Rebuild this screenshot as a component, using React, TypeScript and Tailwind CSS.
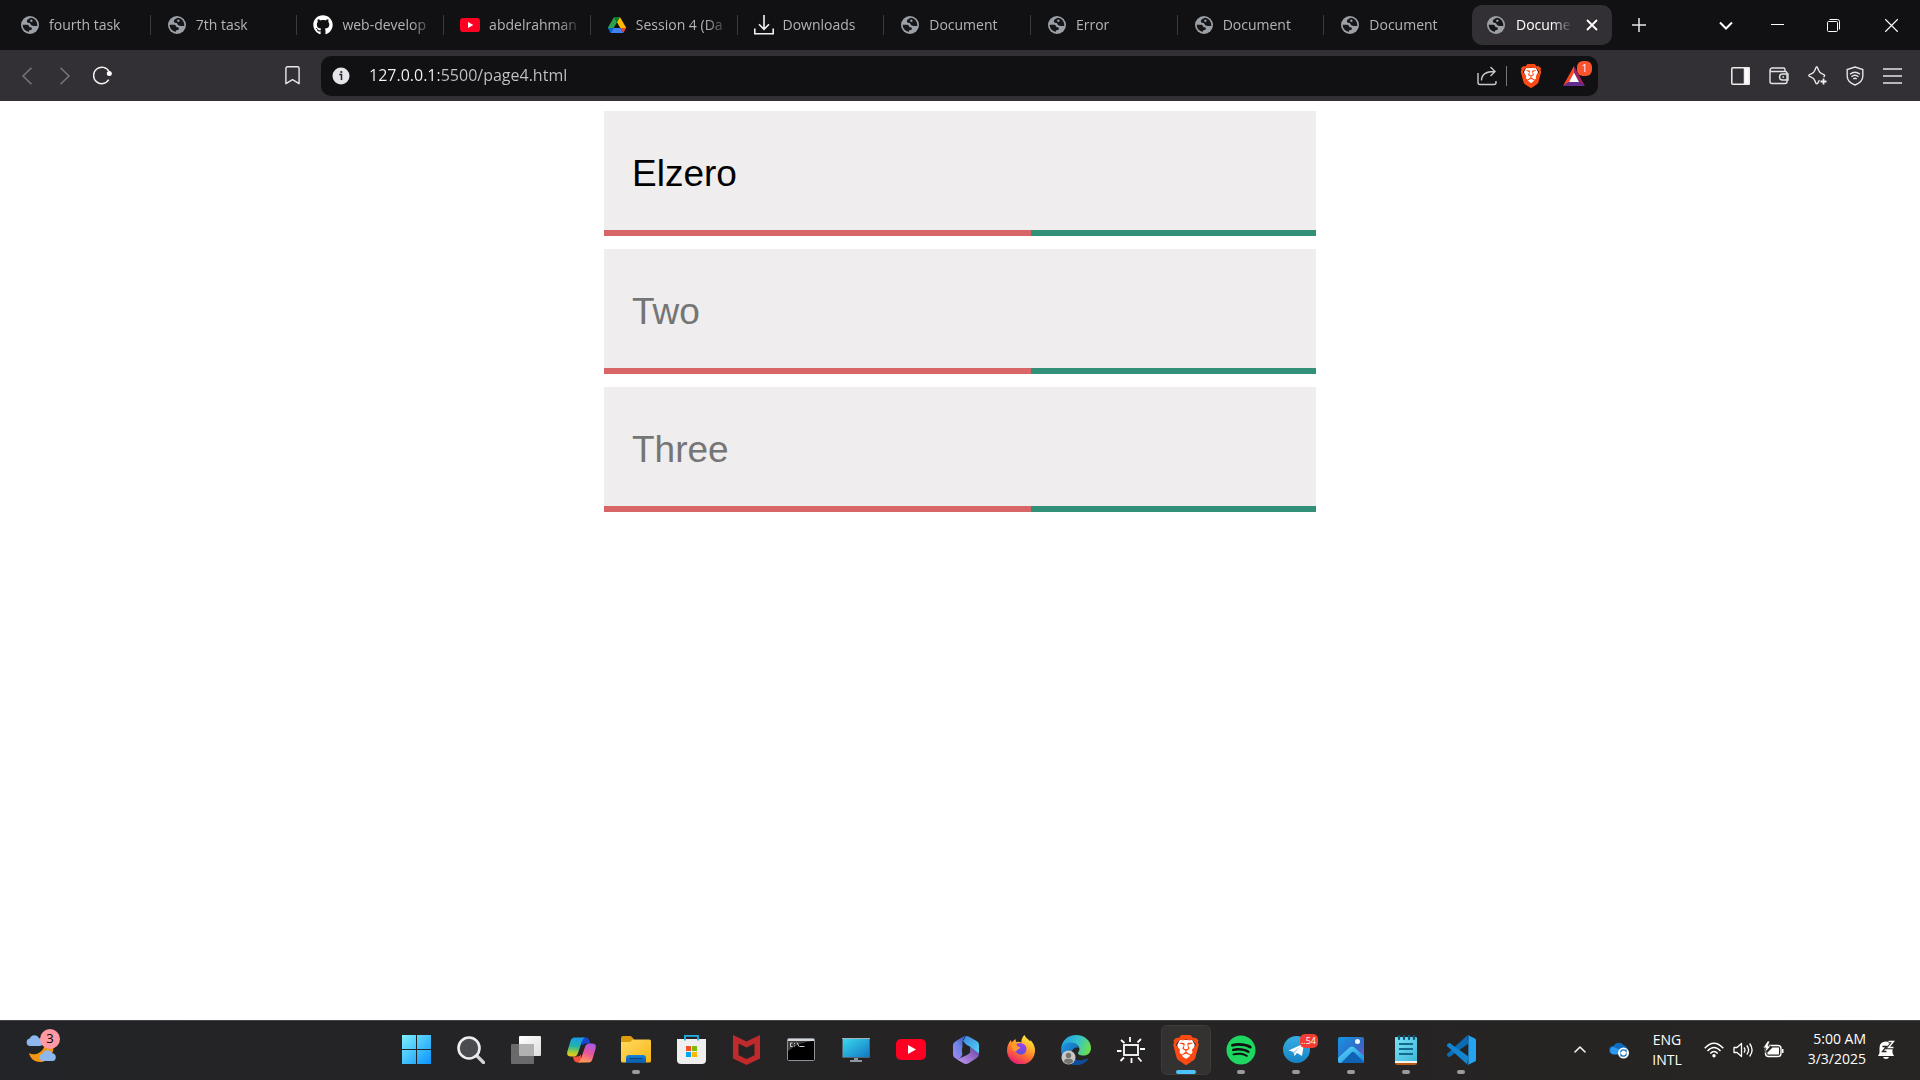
import React, { useState } from "react";
import { FaGithub, FaSpotify } from "react-icons/fa6";
import { SiBrave } from "react-icons/si";
import { VscChevronUp } from "react-icons/vsc";

type IconProps = { className?: string };

/* ---------- favicons ---------- */

const Globe = ({ className = "size-[18px]" }: IconProps) => (
  <svg viewBox="0 0 18 18" className={className} aria-hidden="true">
    <circle cx="9" cy="9" r="9" fill="#9aa0a6" />
    <path
      d="M1.700 8.800h3.800c1.500 0 2.500.6 2.700 1.600.1.700.9.800 1.500.9.900.2 1.300.8 1.100 1.600-.2.900-1 1.100-1.800 1.200-.6.100-.9.700-1.100 1.600C4.300 15.300 1.600 12.500 1.700 8.800Z M9.700 1.800C7.600 2.600 6 3.700 5.800 5.100c-.1 1.200 1 1.900 2.200 1.900.8 0 1.200.5 1.600 1.200.6 1.100 1.600 1.700 3 1.700h3.700c.3-4.300-2.700-7.700-6.600-8.100Zm.3 1.700c1.300.2 1.700.9 1.500 1.700-.3.900-1.500.8-2.100.3-.6-.6-.3-1.600.6-2Z"
      fill="#17171a"
    />
  </svg>
);

const YouTube = ({ className }: IconProps) => (
  <svg viewBox="0 0 30 21" className={className} aria-hidden="true">
    <rect width="30" height="21" rx="5" fill="#ff0022" />
    <path d="M12 6l8 4.500-8 4.500Z" fill="#fff" />
  </svg>
);

const Drive = () => (
  <svg viewBox="0 0 87.300 78" className="w-[18px]" aria-hidden="true">
    <path d="m6.600 66.850 3.850 6.650c.8 1.400 1.950 2.500 3.300 3.300l13.750-23.800H0c0 1.550.4 3.100 1.200 4.500z" fill="#0066da" />
    <path d="M43.650 25 29.900 1.200c-1.350.8-2.500 1.900-3.300 3.300L1.200 48.500A9 9 0 0 0 0 53h27.500z" fill="#2ba24c" />
    <path d="M73.550 76.800c1.350-.8 2.500-1.900 3.300-3.300l1.600-2.750L86.100 57.500c.8-1.400 1.200-2.950 1.200-4.500H59.800l5.850 11.500z" fill="#ea4335" />
    <path d="M43.650 25 57.400 1.200C56.050.4 54.500 0 52.900 0H34.400c-1.600 0-3.150.45-4.500 1.200z" fill="#00832d" />
    <path d="M59.800 53H27.500L13.750 76.800c1.350.8 2.900 1.200 4.500 1.200h50.800c1.600 0 3.150-.45 4.500-1.200z" fill="#3f82f8" />
    <path d="M73.400 26.500 60.700 4.500c-.8-1.400-1.950-2.500-3.300-3.300L43.650 25 59.800 53h27.450c0-1.550-.4-3.100-1.200-4.500z" fill="#ffba00" />
  </svg>
);

const Download = () => (
  <svg viewBox="0 0 20 20" className="size-5" fill="none" stroke="#f2f2f2" strokeWidth="1.600" aria-hidden="true">
    <path d="M10 0v14M5 9.300l5 5 5-5M.8 13.500v5.300h18.400v-5.300" />
  </svg>
);

const Close = ({ className }: IconProps) => (
  <svg viewBox="0 0 12 12" className={className} fill="none" stroke="currentColor" aria-hidden="true">
    <path d="M1 1l10 10M11 1L1 11" />
  </svg>
);

const tabs: { title: string; icon: React.ReactNode }[] = [
  { title: "fourth task", icon: <Globe /> },
  { title: "7th task", icon: <Globe /> },
  { title: "web-develop", icon: <FaGithub className="size-5 text-white" aria-hidden="true" /> },
  { title: "abdelrahman", icon: <YouTube className="w-5" /> },
  { title: "Session 4 (Da", icon: <Drive /> },
  { title: "Downloads", icon: <Download /> },
  { title: "Document", icon: <Globe /> },
  { title: "Error", icon: <Globe /> },
  { title: "Document", icon: <Globe /> },
  { title: "Document", icon: <Globe /> },
];

function TabStrip() {
  return (
    <header className="flex h-[50px] items-center bg-[#111113] pl-1 text-[14px] text-[#b4b4b6]">
      <nav aria-label="Tabs" className="flex min-w-0 flex-1">
        {tabs.map((tab, i) => (
          <button
            key={i}
            className={
              "flex h-5 min-w-0 flex-1 items-center gap-[9px] pl-4 pr-2 text-left " +
              (i < 9 ? "border-r border-[#3b3b3e]" : "")
            }
          >
            <span className="flex w-5 shrink-0 justify-center">{tab.icon}</span>
            <span className="min-w-0 flex-1 overflow-hidden whitespace-nowrap pb-0.5 [mask-image:linear-gradient(to_right,#000_70px,transparent_94px)]">
              {tab.title}
            </span>
          </button>
        ))}
      </nav>
      <div className="ml-[2px] flex h-10 w-[140px] items-center rounded-[10px] bg-[#323035] pl-[15px]">
        <button className="flex items-center gap-[11px] text-white">
          <Globe />
          <span className="w-[56px] whitespace-nowrap pb-0.5 text-left [mask-image:linear-gradient(to_right,#000_calc(100%-20px),transparent)]">
            Docume
          </span>
        </button>
        <button aria-label="Close tab" className="ml-[14px] text-white">
          <Close className="size-3 stroke-[1.800]" />
        </button>
      </div>
      <div className="flex w-[308px] items-center text-white">
        <button aria-label="New tab" className="flex w-[54px] justify-center">
          <svg viewBox="0 0 14 14" className="size-[14px]" stroke="#e6e6e6" strokeWidth="1.500" aria-hidden="true">
            <path d="M7 0v14M0 7h14" />
          </svg>
        </button>
        <button aria-label="Search tabs" className="ml-8 flex w-14 justify-center">
          <svg viewBox="0 0 14 9" className="w-[14px]" fill="none" stroke="#fff" strokeWidth="2" aria-hidden="true">
            <path d="M1 1.500l6 6 6-6" />
          </svg>
        </button>
        <button aria-label="Minimize" className="flex w-[47px] justify-center">
          <svg viewBox="0 0 13 13" className="size-[13px]" stroke="#fff" aria-hidden="true">
            <path d="M0 5.500h13" />
          </svg>
        </button>
        <button aria-label="Restore" className="flex w-[65px] justify-center">
          <svg viewBox="0 0 13 13" className="size-[13px]" fill="none" stroke="#fff" aria-hidden="true">
            <rect x=".5" y="2.500" width="10" height="10" rx="1" />
            <path d="M2.500 .5h8q2 0 2 2v8" />
          </svg>
        </button>
        <button aria-label="Close window" className="flex flex-1 justify-center pr-1">
          <Close className="size-[15px] stroke-[.9]" />
        </button>
      </div>
    </header>
  );
}

const BraveLion = ({ className }: IconProps) => (
  <span className={"grid place-items-center " + (className ?? "")}>
    <svg viewBox="0 0 24 24" className="col-start-1 row-start-1 size-full" aria-hidden="true">
      <path d="M7 4h10l2 4-2 8.500L12 21l-5-4.500L5 8Z" fill="#fff" />
    </svg>
    <SiBrave className="col-start-1 row-start-1 size-full text-[#fc4a14]" aria-hidden="true" />
  </span>
);

function Toolbar() {
  const [url, setUrl] = useState("127.0.0.1:5500/page4.html");
  return (
    <div className="flex h-[51px] items-center bg-[#323035] text-[#e8e8ea]">
      <div className="flex w-[321px] shrink-0 items-center pl-[18px]">
        <button aria-label="Back" className="flex w-[18px] justify-center text-[#79787c]">
          <svg viewBox="0 0 10 18" className="h-[18px]" fill="none" stroke="currentColor" strokeWidth="1.500" aria-hidden="true">
            <path d="M9.500.8L1 9l8.500 8.200" />
          </svg>
        </button>
        <button aria-label="Forward" className="ml-5 flex w-[18px] justify-center text-[#79787c]">
          <svg viewBox="0 0 10 18" className="h-[18px]" fill="none" stroke="currentColor" strokeWidth="1.500" aria-hidden="true">
            <path d="M.5.8L9 9 .5 17.200" />
          </svg>
        </button>
        <button aria-label="Reload" className="ml-[19px]">
          <svg viewBox="0 0 19 19" className="size-[19px]" fill="none" stroke="#f4f4f4" strokeWidth="1.500" aria-hidden="true">
            <path d="M15.800 13.700a8.200 8.200 0 1 1 .2-8.200" />
            <circle cx="16.300" cy="7.500" r="2.500" fill="#fff" stroke="none" />
          </svg>
        </button>
        <button aria-label="Bookmark this page" className="ml-[173px]">
          <svg viewBox="0 0 15 19" className="h-[19px]" fill="none" stroke="#e8e8ea" strokeWidth="1.400" strokeLinejoin="round" aria-hidden="true">
            <path d="M.9 2.500q0-1.700 1.700-1.700h9.800q1.700 0 1.700 1.700v15.200l-6.600-4-6.600 4Z" />
          </svg>
        </button>
      </div>
      <div className="flex h-10 min-w-0 flex-1 items-center rounded-[10px] bg-[#111113] pl-[11px] pr-[6px]">
        <button aria-label="Site information">
          <svg viewBox="0 0 18 18" className="size-[18px]" aria-hidden="true">
            <circle cx="9" cy="9" r="8.500" fill="#e6e5ea" />
            <path d="M7.300 7.500H9.500V13" stroke="#222" strokeWidth="1.500" fill="none" />
            <circle cx="9.300" cy="5" r="1.100" fill="#222" />
          </svg>
        </button>
        <input
          aria-label="Address"
          value={url}
          onChange={(e) => setUrl(e.target.value)}
          className="ml-[19px] min-w-0 flex-1 bg-[linear-gradient(90deg,#f5f5f5_70px,#c4c4c6_70px)] bg-clip-text pb-0.5 text-[16px] text-transparent caret-white outline-none"
        />
        <button aria-label="Share">
          <svg viewBox="0 0 20 20" className="size-5" fill="none" stroke="#c9c9cb" strokeWidth="1.400" aria-hidden="true">
            <path d="M1 7v9.500q0 2 2 2h14q2 0 2-2V15M4.500 14.500c0-5 3.500-9 13-9M13.500 1l4.500 4.500-4.500 4.500" />
          </svg>
        </button>
        <span className="ml-[9px] h-5 w-px bg-[#77777a]" />
        <button aria-label="Brave Shields" className="ml-3">
          <BraveLion className="size-6" />
        </button>
        <button aria-label="Rewards, 1 new" className="relative ml-5">
          <svg viewBox="0 0 22 20" className="w-[22px]" aria-hidden="true">
            <path d="M11 0L0 20l5.500-3.500L11 7Z" fill="#ff4724" />
            <path d="M11 0l11 20-5.500-3.500L11 7Z" fill="#9e1f63" />
            <path d="M0 20h22l-5.500-4h-11Z" fill="#662d91" />
            <path d="M11 6.500l5 9.500H6Z" fill="#fff" />
          </svg>
          <span className="absolute -right-[7px] -top-[5px] grid size-[15px] place-items-center rounded-[6px] bg-[#fb542b] text-[10px] leading-none text-white">
            1
          </span>
        </button>
        <span className="w-[7px]" />
      </div>
      <div className="flex w-[322px] shrink-0 items-center justify-end gap-[19px] pr-[18px]">
        <button aria-label="Show sidebar">
          <svg viewBox="0 0 19 18" className="w-[19px]" fill="none" stroke="#eee" strokeWidth="1.500" aria-hidden="true">
            <rect x=".8" y=".8" width="17.400" height="16.400" rx="1" />
            <path d="M13.500 1h4.500v16h-4.500Z" fill="#fff" />
          </svg>
        </button>
        <button aria-label="Wallet">
          <svg viewBox="0 0 20 18" className="w-5" fill="none" stroke="#e4e4e6" strokeWidth="1.400" aria-hidden="true">
            <path d="M1 3v11.500q0 2 2 2h13q2 0 2-2v-8q0-2-2-2H3q-2 0-2-1.500T3 1h11.500q1.500 0 1.500 1.500v2" />
            <path d="M19 7h-5.500a3 3 0 0 0 0 6H19ZM13.500 10h1.500" />
          </svg>
        </button>
        <button aria-label="Leo AI">
          <svg viewBox="0 0 19 19" className="size-[19px]" fill="none" stroke="#eee" strokeWidth="1.400" strokeLinejoin="round" aria-hidden="true">
            <path d="M11.500 14.300c-.5.500-.8 1-1 1.600-.6 1.300-1 2-1.800 2s-1-.8-1.600-2.700c-.8-2.500-1.500-3.200-3.900-4-1.700-.6-2.400-.9-2.400-1.700s.7-1.100 2.400-1.700c2.400-.8 3.100-1.500 3.900-3.900.6-1.800.8-3.100 1.600-3.100s1.100 1.300 1.700 3.100c.8 2.400 1.500 3.100 3.800 3.900 1.700.6 2.400.9 2.400 1.700 0 .6-.4 1-1.100 1.300" />
            <path d="M15.500 12.500v6M12.500 15.500h6" strokeWidth="1.800" />
          </svg>
        </button>
        <button aria-label="VPN">
          <svg viewBox="0 0 18 20" className="w-[18px]" fill="none" stroke="#e4e4e6" strokeWidth="1.400" aria-hidden="true">
            <path d="M9 1l7.800 2.500v6.500q0 6-7.800 9-7.800-3-7.800-9V3.500Z" />
            <path d="M4 8.200q5-4 10 0M5.500 10.700q3.500-3 7 0M7.300 13q1.700-1.500 3.400 0" />
          </svg>
        </button>
        <button aria-label="Menu">
          <svg viewBox="0 0 19 16" className="w-[19px]" stroke="#e4e4e6" strokeWidth="1.500" aria-hidden="true">
            <path d="M0 1h19M0 8h19M0 15h19" />
          </svg>
        </button>
      </div>
    </div>
  );
}

/* ---------- page ---------- */

function Field({ name, initial = "" }: { name: string; initial?: string }) {
  const [value, setValue] = useState(initial);
  return (
    <div>
      <input
        aria-label={name}
        placeholder={name}
        value={value}
        onChange={(e) => setValue(e.target.value)}
        className="block h-[119px] w-full bg-[#efedee] px-7 pt-[6px] font-['Liberation_Sans',Arial,sans-serif] text-[37px] text-black outline-none placeholder:text-[#757575] placeholder:opacity-100"
      />
      <div className="flex h-[6px]">
        <span className="w-3/5 bg-[#d96666]" />
        <span className="w-2/5 bg-[#339078]" />
      </div>
    </div>
  );
}

/* ---------- taskbar icons ---------- */

const WindowsLogo = () => (
  <svg viewBox="0 0 29 29" className="size-[29px]" aria-hidden="true">
    <defs>
      <linearGradient id="win" gradientUnits="userSpaceOnUse" x1="0" y1="0" x2="29" y2="29">
        <stop stopColor="#7df0fd" />
        <stop offset="1" stopColor="#0a93fb" />
      </linearGradient>
    </defs>
    <path d="M0 0h14v14H0ZM15 0h14v14H15ZM0 15h14v14H0ZM15 15h14v14H15Z" fill="url(#win)" />
  </svg>
);

const SearchIcon = () => (
  <svg viewBox="0 0 28 28" className="size-7" fill="none" aria-hidden="true">
    <path d="M19 19l7.500 7.500" stroke="#d2d5d8" strokeWidth="3.400" strokeLinecap="round" />
    <circle cx="12" cy="12" r="10.500" fill="#4b4c50" stroke="#eceef0" strokeWidth="2.600" />
  </svg>
);

const TaskView = () => (
  <svg viewBox="0 0 30 28" className="w-[30px]" aria-hidden="true">
    <defs>
      <linearGradient id="tv" x1="0" y1="0" x2="1" y2="1">
        <stop stopColor="#fff" />
        <stop offset="1" stopColor="#dedede" />
      </linearGradient>
    </defs>
    <rect x="8" width="22" height="20" rx="1" fill="url(#tv)" />
    <rect y="8" width="23" height="20" rx="1" fill="#6a6a6c" />
    <path d="M8 8h15v12H9q-1 0-1-1Z" fill="#b1b1b1" />
  </svg>
);

const Copilot = () => (
  <svg viewBox="0 0 29 26" className="w-[29px]" aria-hidden="true">
    <defs>
      <linearGradient id="cpA" x1=".3" y1="0" x2=".2" y2="1">
        <stop stopColor="#1a9be8" />
        <stop offset=".45" stopColor="#20b5a8" />
        <stop offset=".8" stopColor="#b5cf2b" />
        <stop offset="1" stopColor="#f3c51e" />
      </linearGradient>
      <linearGradient id="cpB" x1=".7" y1="0" x2=".4" y2="1">
        <stop stopColor="#a65ce8" />
        <stop offset=".5" stopColor="#e8559b" />
        <stop offset="1" stopColor="#ff9c56" />
      </linearGradient>
    </defs>
    <path d="M15 .5h3.500q3 0 3.800 3l1 3H18q-2 0-3 3Z" fill="#1b45d0" />
    <path d="M14 25.500h-3.500q-3 0-3.800-3l-1-3H11q2 0 3-3Z" fill="#f0503c" />
    <path d="M7.500.5H18q-2 .5-3 4l-4 11.500q-1 3.500-4.500 3.500H4q-5 0-3.500-5.500L3.500 4Q4.500.5 7.500.5Z" fill="url(#cpA)" />
    <path d="M21.500 25.500H11q2-.5 3-4l4-11.500q1-3.500 4.500-3.500H25q5 0 3.500 5.500l-3 10q-1 3.500-4 3.500Z" fill="url(#cpB)" />
    <path d="M14 8h2.500l-2.800 10h-2.500Z" fill="#242326" />
  </svg>
);

const Explorer = () => (
  <svg viewBox="0 0 30 27" className="w-[30px]" aria-hidden="true">
    <defs>
      <linearGradient id="fld" x1="0" y1="0" x2="1" y2="1">
        <stop stopColor="#ffdb61" />
        <stop offset="1" stopColor="#f8b617" />
      </linearGradient>
      <linearGradient id="fldb" x1="0" y1="0" x2="0" y2="1">
        <stop stopColor="#1683d9" />
        <stop offset="1" stopColor="#0a59a8" />
      </linearGradient>
    </defs>
    <path d="M0 2q0-2 2-2h7q1 0 2 1l2 2.500V10H0Z" fill="#dc9c0d" />
    <path d="M0 6h9l3-2.500h16.500q1.500 0 1.500 1.500v20q0 1.500-1.500 1.500h-27Q0 26.500 0 25Z" fill="url(#fld)" />
    <path d="M5 27v-5q0-3 3-3h14q3 0 3 3v5Z" fill="url(#fldb)" />
    <rect x="8.500" y="22" width="13" height="1.300" rx=".6" fill="#0a4582" />
  </svg>
);

const Store = () => (
  <svg viewBox="0 0 29 29" className="size-[29px]" aria-hidden="true">
    <path d="M0 4h29v21q0 4-4 4H4q-4 0-4-4Z" fill="#efefef" />
    <path d="M8 5.500V.8h13v4.700" stroke="#1eb4e8" strokeWidth="1.800" fill="none" />
    <path d="M9 11h5v5H9Z" fill="#f25022" />
    <path d="M15 11h5v5h-5Z" fill="#7fba00" />
    <path d="M9 17h5v5H9Z" fill="#00a4ef" />
    <path d="M15 17h5v5h-5Z" fill="#ffb900" />
  </svg>
);

const McAfee = () => (
  <svg viewBox="0 0 27 30" className="h-[30px]" aria-hidden="true">
    <path
      d="M0 0l13.500 6.500L27 0v23.500L13.500 30 0 23.500ZM5.500 8.500v11.700l8 3.800 8-3.800V8.500l-8 4Z"
      fill="#c02a2c"
      fillRule="evenodd"
    />
  </svg>
);

const CommandPrompt = () => (
  <svg viewBox="0 0 28 23" className="w-7" aria-hidden="true">
    <rect x=".5" y=".5" width="27" height="22" rx="1" fill="#000" stroke="#8f9398" />
    <path d="M1 1h26v2H1Z" fill="#d4d7db" />
    <path d="M1 3h25q-14 1-25 10Z" fill="#3c3c3c" />
    <path d="M5.500 5H3.500v3.500h2M7.500 5v1M7.500 7.500v1M10 4.500l2 4M12.500 8.500h5" stroke="#dcdcdc" fill="none" strokeWidth=".9" />
  </svg>
);

const ThisPC = () => (
  <svg viewBox="0 0 28 24" className="w-7" aria-hidden="true">
    <defs>
      <linearGradient id="pc" x1="0" y1="0" x2="1" y2="1">
        <stop stopColor="#3ad8ec" />
        <stop offset="1" stopColor="#1178c4" />
      </linearGradient>
    </defs>
    <path d="M12 19h4v3h4v2H8v-2h4Z" fill="#8d979e" />
    <rect width="28" height="20" rx="1" fill="#50626e" />
    <path d="M0 0h28v1H0Z" fill="#a5b2ba" />
    <rect x="1" y="1" width="26" height="18" fill="url(#pc)" />
  </svg>
);

const Microsoft365 = () => (
  <svg viewBox="0 0 26 28" className="h-7" aria-hidden="true">
    <defs>
      <linearGradient id="mA" x1="1" y1="0" x2="0" y2="1">
        <stop stopColor="#2b55b5" />
        <stop offset=".5" stopColor="#6e83e8" />
        <stop offset="1" stopColor="#a98af0" />
      </linearGradient>
      <linearGradient id="mB" x1="0" y1="0" x2="1" y2="1">
        <stop stopColor="#3a86e0" />
        <stop offset="1" stopColor="#54d6f3" />
      </linearGradient>
      <linearGradient id="mC" x1="0" y1="1" x2="1" y2="0">
        <stop stopColor="#c39cf2" />
        <stop offset="1" stopColor="#6a3fa0" />
      </linearGradient>
    </defs>
    <path d="M13 0q2 0 3.500 1L24 5.200q2 1.300 2 3.500v9L17.500 16v-5L13 8.500 10 5Z" fill="url(#mB)" />
    <path d="M26 17.500q0 3-2 4.200L16 27q-3 1.800-6 0L4 23.500l10-4.500 3.500-3V11Z" fill="url(#mC)" />
    <path d="M13 0Q9 3 9.500 8v9q0 4-5 6.500L2 22q-2-1.300-2-3.500v-9Q0 7 2 5.800L9.500 1Q11 0 13 0Z" fill="url(#mA)" />
    <path d="M13 9.500l4 2.300v4.600l-4 2.300-4-2.300v-4.600Z" fill="#252326" />
  </svg>
);

const Firefox = () => (
  <svg viewBox="0 0 28 29" className="h-[29px]" aria-hidden="true">
    <defs>
      <linearGradient id="ff" x1=".8" y1="0" x2=".3" y2="1">
        <stop stopColor="#fff14a" />
        <stop offset=".35" stopColor="#ffb429" />
        <stop offset=".65" stopColor="#ff6a32" />
        <stop offset="1" stopColor="#e5187c" />
      </linearGradient>
      <linearGradient id="ffp" x1=".6" y1="0" x2=".3" y2="1">
        <stop stopColor="#a33ff0" />
        <stop offset="1" stopColor="#5b50d8" />
      </linearGradient>
    </defs>
    <path d="M17.500 0c1 3 4 4 5.500 6.200l.7-1C27 9 28 12 28 15.500A13.700 13.700 0 0 1 0 15.500C0 11 1.500 8 4 5l.5 2.500L8.500 4 9 7.200c2-.6 4-.5 5.500.3C14 4.500 15.500 2 17.500 0Z" fill="url(#ff)" />
    <path d="M9.500 9c3-2 8-1 9.500 2.500s-.5 8-5 8c-3 0-5.500-2-5.500-4.500l4-1.500c1-.7-.5-1.500-2-2Z" fill="url(#ffp)" />
    <path d="M4.500 9.500c2-.5 3.500.5 5 1.500 1.500.9 3.500.7 3.800 1.500.2 1-2.500 1.500-3.300 2.800-.7 1.200-2.300 1-4 0Z" fill="#ff9a2c" />
  </svg>
);

const Edge = () => (
  <svg viewBox="0 0 30 30" className="size-[30px]" aria-hidden="true">
    <defs>
      <linearGradient id="edA" x1="0" y1=".3" x2="1" y2=".6">
        <stop stopColor="#1f9fe0" />
        <stop offset=".5" stopColor="#35c1cf" />
        <stop offset="1" stopColor="#6ee04a" />
      </linearGradient>
      <linearGradient id="edB" x1="0" y1="0" x2="1" y2="1">
        <stop stopColor="#1f9be6" />
        <stop offset="1" stopColor="#0c4c97" />
      </linearGradient>
    </defs>
    <path d="M0 14C1 5 7 0 15 0c9 0 15 6 15 13 0 5-3.500 7.500-7.500 7.500-4 0-5.500-1.200-5.500-2.500 0-1 1.500-1.500 1.500-4C18.500 11 15 8 10 8 5 8 1 11 0 14Z" fill="url(#edA)" />
    <path d="M0 14c1-4 5-6.500 9.500-6.500 5 0 8 2.500 8.500 5.500-4-1.500-7.500 1.500-7.500 6 0 5 5 9 10 9.500-1.500.9-3.500 1.500-5.500 1.500C6 30 0 23 0 14Z" fill="url(#edB)" />
    <path d="M11 18c-.5 5 5 8 9.500 7.200 3.500-.5 5.500-2 6.500-1.700.8.3-3 6.500-11 6.500-7 0-10-7-5-12Z" fill="#0e4f9c" />
    <circle cx="7.500" cy="22.500" r="7" fill="#c9c7c5" />
    <circle cx="7.500" cy="20.500" r="2.700" fill="#77736f" />
    <path d="M3 27q0-3.200 3-3.200h3q3 0 3 3.200-4.500 4-9 0Z" fill="#77736f" />
  </svg>
);

const Brightness = () => (
  <svg viewBox="0 0 28 28" className="size-7" fill="none" stroke="#fff" strokeWidth="1.800" aria-hidden="true">
    <rect x="7" y="9" width="14" height="10" />
    <path d="M13 1v5M14.500 22v5M0 15h4.500M23 13h5M4 4l3.500 3M20.500 6.500L24 3M3.500 25l3.500-3.500M21 21.500l3.500 4" />
  </svg>
);

const Spotify = () => (
  <span className="grid size-[30px] place-items-center rounded-full bg-[radial-gradient(#111_60%,transparent_62%)]">
    <FaSpotify className="size-[30px] text-[#1ed760]" aria-hidden="true" />
  </span>
);

const Telegram = () => (
  <span className="relative block">
    <svg viewBox="0 0 27 27" className="size-[27px]" aria-hidden="true">
      <defs>
        <linearGradient id="tg" x1="0" y1="0" x2="0" y2="1">
          <stop stopColor="#38aee5" />
          <stop offset="1" stopColor="#1683c4" />
        </linearGradient>
      </defs>
      <circle cx="13.500" cy="13.500" r="13.500" fill="url(#tg)" />
      <path d="M5.500 14.500L21 7.500l-2 12.500-5-3-2.500 3-1-4Z" fill="#fff" />
      <path d="M10.500 16l7-6-6.500 8Z" fill="#a9cfe8" />
    </svg>
    <span className="absolute -right-2 -top-[2px] h-[14px] w-[18px] rounded-[5px] bg-[#f23c34] text-center text-[9px] leading-[14px] text-white">
      ..54
    </span>
  </span>
);

const Photos = () => (
  <svg viewBox="0 0 26 26" className="size-[26px]" aria-hidden="true">
    <defs>
      <linearGradient id="phA" x1="0" y1="0" x2="1" y2="1">
        <stop stopColor="#1496e4" />
        <stop offset=".6" stopColor="#3468c4" />
        <stop offset="1" stopColor="#9a55c0" />
      </linearGradient>
      <linearGradient id="phB" x1="0" y1="0" x2="1" y2="1">
        <stop stopColor="#5fdcfa" />
        <stop offset="1" stopColor="#138ae0" />
      </linearGradient>
    </defs>
    <rect width="26" height="26" rx="2" fill="url(#phA)" />
    <path d="M0 24v-3L11.500 10.500q2.500-2 5 0L26 19v5q0 2-2 2H2q-2 0-2-2Z" fill="url(#phB)" />
    <path d="M3 26L13.500 15.500q1.500-1.500 3 0L26 25q-.5 1-2 1Z" fill="#0f62b4" />
    <circle cx="19.500" cy="4.500" r="2.500" fill="#f4f7fc" />
  </svg>
);

const Notepad = () => (
  <svg viewBox="0 0 22 30" className="h-[30px]" aria-hidden="true">
    <defs>
      <linearGradient id="np" x1="0" y1="0" x2="1" y2="1">
        <stop stopColor="#7be4f6" />
        <stop offset="1" stopColor="#3eb6d8" />
      </linearGradient>
    </defs>
    <path d="M0 24h22v4q0 2-2 2H2q-2 0-2-2Z" fill="#b55c12" />
    <path d="M0 24h22v4H0Z" fill="#f6f3ee" />
    <path d="M0 3q0-1 1-1h20q1 0 1 1v23H0Z" fill="url(#np)" />
    <path d="M4 0v4M9 0v4M14 0v4M19 0v4" stroke="#0f5576" strokeWidth="2.200" strokeLinecap="round" />
    <path d="M4 9h14M4 14h14M4 19h14" stroke="#13698f" strokeWidth="1.800" />
  </svg>
);

const VSCode = () => (
  <svg viewBox="0 0 30 30" className="size-[30px]" aria-hidden="true">
    <path d="M1.200 18.800l20-18.200 1.300 7.900L4 21.800q-.8.600-1.500 0l-1.300-1.200q-.9-.9 0-1.800Z" fill="#0a6cb5" />
    <path d="M1.200 11.200l20 18.200 1.300-7.900L4 8.200q-.8-.6-1.500 0L1.200 9.400q-.9.900 0 1.800Z" fill="#1284d0" />
    <path d="M22 .3l7 3.200q1 .5 1 1.600v19.800q0 1.100-1 1.600l-7 3.200q-.8.300-1.500-.4 1.500 1 1.900-.8v-27q-.4-1.800-1.900-.8.700-.7 1.500-.4Z" fill="#25a3f2" />
  </svg>
);

type App = { name: string; icon: React.ReactNode; state?: "running" | "active" };

const apps: App[] = [
  { name: "Start", icon: <WindowsLogo /> },
  { name: "Search", icon: <SearchIcon /> },
  { name: "Task View", icon: <TaskView /> },
  { name: "Copilot", icon: <Copilot /> },
  { name: "File Explorer", icon: <Explorer />, state: "running" },
  { name: "Microsoft Store", icon: <Store /> },
  { name: "McAfee", icon: <McAfee /> },
  { name: "Command Prompt", icon: <CommandPrompt /> },
  { name: "This PC", icon: <ThisPC /> },
  { name: "YouTube", icon: <YouTube className="w-[30px]" /> },
  { name: "Microsoft 365", icon: <Microsoft365 /> },
  { name: "Firefox", icon: <Firefox /> },
  { name: "Microsoft Edge", icon: <Edge /> },
  { name: "Brightness", icon: <Brightness /> },
  { name: "Brave", icon: <BraveLion className="size-[30px]" />, state: "active" },
  { name: "Spotify", icon: <Spotify />, state: "running" },
  { name: "Telegram", icon: <Telegram />, state: "running" },
  { name: "Photos", icon: <Photos />, state: "running" },
  { name: "Notepad", icon: <Notepad />, state: "running" },
  { name: "Visual Studio Code", icon: <VSCode />, state: "running" },
];

const Cloud = ({ className }: IconProps) => (
  <svg viewBox="0 0 18 11" className={className} aria-hidden="true">
    <path d="M4 11a3.800 3.800 0 0 1-.3-7.500 5 5 0 0 1 9.300-.3A4 4 0 0 1 14 11Z" fill="#8db8ee" />
  </svg>
);

function Weather() {
  return (
    <button aria-label="Weather, 3 alerts" className="relative ml-[26px] h-[42px] w-[34px]">
      <svg viewBox="0 0 28 22" className="absolute left-[2px] top-[12px] w-7" aria-hidden="true">
        <path d="M25 3c2 8-3 18-13 18C6 21 2 17 1 12c5 3 13 1 16-8Z" fill="#f2960f" />
      </svg>
      <Cloud className="absolute left-0 top-[6px] w-[18px]" />
      <Cloud className="absolute left-[13px] top-[21px] w-[18px]" />
      <span className="absolute right-0 top-0 grid size-5 place-items-center rounded-full bg-[#ff99a4] text-[13px] leading-none text-black">
        3
      </span>
    </button>
  );
}

function Tray() {
  return (
    <div className="flex items-center pl-[85px] text-[14px] leading-5 text-white">
      <button aria-label="Show hidden icons">
        <VscChevronUp className="size-[18px] stroke-[.6]" aria-hidden="true" />
      </button>
      <button aria-label="OneDrive" className="ml-5">
        <svg viewBox="0 0 20 18" className="w-5" aria-hidden="true">
          <path d="M4 13a4 4 0 0 1 .5-8A6 6 0 0 1 15 4.500a5 5 0 0 1 2 8.500Z" fill="#0f6cbd" />
          <path d="M4 13.500a4 4 0 0 1-.5-7.500q3 0 8.500 3.500v4Z" fill="#2b9af0" />
          <circle cx="14.500" cy="12" r="5.500" fill="#fff" />
          <path d="M11.500 11.500a3 3 0 0 1 5.500-1.300V8.500M17.500 12.500a3 3 0 0 1-5.500 1.300v1.700" stroke="#0f6cbd" strokeWidth="1.200" fill="none" />
        </svg>
      </button>
      <button className="ml-[22px] w-8 text-center">
        ENG
        <br />
        INTL
      </button>
      <button aria-label="Network, volume and battery" className="ml-[21px] flex items-center gap-[9px]">
        <svg viewBox="0 0 20 16" className="w-5" fill="none" stroke="#fff" strokeWidth="1.400" aria-hidden="true">
          <path d="M.7 6.200q9.300-10 18.600 0M3.500 9q6.500-7 13 0M6.300 11.500q3.700-4 7.400 0" />
          <circle cx="10" cy="13.700" r="1.700" fill="#fff" stroke="none" />
        </svg>
        <svg viewBox="0 0 21 16" className="w-[21px]" fill="none" stroke="#fff" strokeWidth="1.300" strokeLinejoin="round" aria-hidden="true">
          <path d="M1 5.500h3L8.500 1.500v13L4 10.500H1ZM11 5.500q2 2.500 0 5M13.800 3.500q3.600 4.500 0 9M16.600 1.500q5 6.500 0 13" />
        </svg>
        <svg viewBox="0 0 21 17" className="w-[21px]" aria-hidden="true">
          <rect x="2.500" y="4.500" width="15.500" height="11" rx="3" fill="none" stroke="#fff" strokeWidth="1.400" />
          <path d="M4.500 11.500l5-5h6.500v7h-11.500Z" fill="#fff" />
          <path d="M19 8h1.500v4H19Z" fill="#fff" />
          <path d="M4.500 0L0 7h3l-1.500 5L8 5H5l2-5Z" fill="#fff" stroke="#252423" strokeWidth=".8" />
        </svg>
      </button>
      <button className="ml-[18px] w-[64px] whitespace-nowrap pb-[2px] text-right">
        5:00 AM
        <br />
        3/3/2025
      </button>
      <button aria-label="Notifications" className="ml-[11px]">
        <svg viewBox="0 0 18 20" className="w-[18px]" aria-hidden="true">
          <path d="M2.500 13V8q0-6.500 6.500-6.500T15.500 8v5l1.500 3H1ZM6 17h6q-.5 2-3 2t-3-2Z" fill="#fff" />
          <path d="M5.500 6.500h4L5.500 11.500h4" fill="none" stroke="#252423" strokeWidth="1.300" />
          <path d="M11.500 1.500h5l-5 6h5" fill="none" stroke="#252423" strokeWidth="3.400" />
          <path d="M11.500 1.500h5l-5 6h5" fill="none" stroke="#fff" strokeWidth="1.400" />
        </svg>
      </button>
    </div>
  );
}

function Taskbar() {
  return (
    <footer className="grid h-[60px] grid-cols-[1fr_auto_434px] items-center border-t border-[#414346] bg-linear-to-r from-[#232427] via-[#252324] to-[#262523] pb-[2px]">
      <Weather />
      <nav aria-label="Taskbar" className="flex gap-[5px]">
        {apps.map((app) => (
          <button
            key={app.name}
            aria-label={app.name}
            className={
              "relative grid size-[50px] place-items-center rounded-[6px] border " +
              (app.state === "active" ? "border-[#3d3c3b] bg-[#333231]" : "border-transparent")
            }
          >
            {app.icon}
            {app.state === "running" && (
              <span className="absolute bottom-0 left-1/2 h-1 w-2 -translate-x-1/2 rounded-full bg-[#9b9b9b]" />
            )}
            {app.state === "active" && (
              <span className="absolute bottom-0 left-1/2 h-1 w-5 -translate-x-1/2 rounded-full bg-[#4cc2ff]" />
            )}
          </button>
        ))}
      </nav>
      <Tray />
    </footer>
  );
}

export default function App() {
  return (
    <div className="flex min-h-screen flex-col bg-white font-['Open_Sans','Noto_Sans',sans-serif]">
      <TabStrip />
      <Toolbar />
      <main className="flex-1">
        <form className="mx-auto mt-[10px] flex w-[712px] max-w-full flex-col gap-[13px]">
          <Field name="One" initial="Elzero" />
          <Field name="Two" />
          <Field name="Three" />
        </form>
      </main>
      <Taskbar />
    </div>
  );
}
